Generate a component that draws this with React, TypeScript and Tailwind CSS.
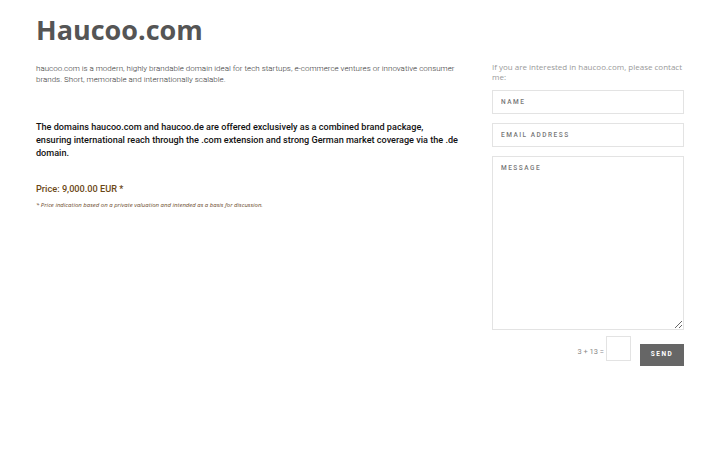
export default function App() {
  return (
    <main className="min-h-[450px] w-[720px] bg-white">
      <div className="flex gap-8 px-9 pt-[14px]">
        {/* Left column */}
        <section className="w-[424px]">
          <h1 className="text-[27px] font-bold leading-[32px] text-[#555555] [font-family:'Open_Sans',sans-serif]">
            Haucoo.com
          </h1>
          <p className="mt-[17px] text-[8px] font-light leading-[11px] text-[#333333] [font-family:Roboto,sans-serif]">
            haucoo.com is a modern, highly brandable domain ideal for tech startups, e-commerce ventures or innovative consumer brands. Short, memorable and internationally scalable.
          </p>
          <p className="mt-[36px] text-[9.1px] font-medium leading-[13px] text-[#111111] [font-family:Roboto,sans-serif]">
            The domains haucoo.com and haucoo.de are offered exclusively as a combined brand package, ensuring international reach through the .com extension and strong German market coverage via the .de domain.
          </p>
          <p className="mt-[22px] text-[9.2px] font-medium leading-[13px] text-[#6b4716] [font-family:Roboto,sans-serif]">
            Price: 9,000.00 EUR *
          </p>
          <p className="mt-[6px] text-[6px] italic leading-[9px] text-[#6b4a2a] [font-family:'Open_Sans',sans-serif]">
            * Price indication based on a private valuation and intended as a basis for discussion.
          </p>
        </section>

        {/* Contact form */}
        <aside className="ml-auto mr-0 w-[192px] pt-[48px]">
          <p className="text-[8px] leading-[9.5px] text-[#999999] [font-family:'Open_Sans',sans-serif]">
            If you are interested in haucoo.com, please contact me:
          </p>
          <form className="mt-[9px] flex flex-col gap-[9px] [font-family:Roboto,sans-serif]">
            <input
              placeholder="NAME"
              className="h-[24px] w-full border border-[#e3e3e3] px-[8px] text-[6.5px] font-medium tracking-[1.5px] placeholder:text-[#777777]"
            />
            <input
              placeholder="EMAIL ADDRESS"
              className="h-[24px] w-full border border-[#e3e3e3] px-[8px] text-[6.5px] font-medium tracking-[1.5px] placeholder:text-[#777777]"
            />
            <textarea
              placeholder="MESSAGE"
              className="h-[174px] w-full border border-[#e3e3e3] px-[8px] py-[7px] text-[6.5px] font-medium tracking-[1.5px] placeholder:text-[#777777]"
            />
            <div className="-mt-[3px] flex items-start justify-end">
              <span className="mt-[10px] mr-[2px] text-[7.5px] text-[#888888]">3 + 13 =</span>
              <input className="h-[25px] w-[25px] border border-[#e3e3e3]" />
              <button
                type="button"
                className="mt-[8px] ml-[9px] h-[22px] w-[44px] bg-[#666666] text-[6.5px] font-bold tracking-[1.5px] text-white"
              >
                SEND
              </button>
            </div>
          </form>
        </aside>
      </div>
    </main>
  );
}
